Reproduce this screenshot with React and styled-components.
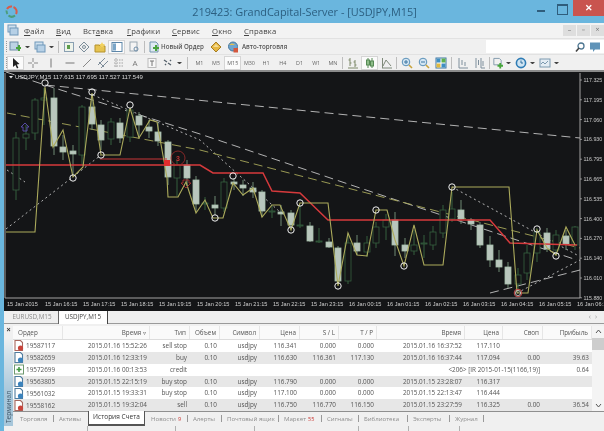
import React from 'react'
import styled, { createGlobalStyle } from 'styled-components'

const GlobalStyle = createGlobalStyle`
  html, body { margin: 0; padding: 0; background: #6ab6de; }
  body { font-family: "Open Sans", "Liberation Sans", sans-serif; overflow: hidden; }
  * { box-sizing: border-box; }
`

const Window = styled.div`
  width: 604px;
  height: 431px;
  display: flex;
  flex-direction: column;
  background: #6ab6de;
  overflow: hidden;
  filter: blur(0.3px);
`

const TitleBar = styled.div`
  height: 23px;
  flex: none;
  position: relative;
  display: flex;
  align-items: center;
  justify-content: center;
`

const Title = styled.div`
  font-size: 10.9px;
  color: #2c5f80;
  margin-top: -1px;
  margin-left: 5px;
`

const Logo = styled.svg`
  position: absolute;
  left: 5px;
  top: 5px;
`

const WinButtons = styled.div`
  position: absolute;
  right: 0;
  top: 0;
  display: flex;
  align-items: flex-start;
`

const WinGlyph = styled.div`
  width: 20px;
  height: 16px;
  position: relative;
  &::after {
    content: '';
    position: absolute;
    left: 5px;
    ${p => (p.$max
      ? 'top: 4px; width: 9px; height: 8px; border: 1px solid #2f5d7c; border-top-width: 2px;'
      : 'top: 10px; width: 8px; height: 2px; background: #2f5d7c;')}
  }
`

const CloseButton = styled.div`
  width: 31px;
  height: 16px;
  margin-left: 1px;
  background: #c9544f;
  color: #fff;
  font: bold 9px "Liberation Sans", sans-serif;
  display: flex;
  align-items: center;
  justify-content: center;
`

const Body = styled.div`
  margin-left: 4px;
  flex: 1;
  min-height: 0;
  display: flex;
  flex-direction: column;
  background: #f0f0f0;
`

const MenuBar = styled.div`
  height: 15px;
  flex: none;
  display: flex;
  align-items: center;
  position: relative;
  background: #f3f3f3;
  padding-left: 3px;
`

const MenuItem = styled.span`
  font-size: 7.7px;
  color: #444;
  width: ${p => p.$w}px;
  letter-spacing: 0.15px;
`

const ChildButtons = styled.div`
  position: absolute;
  right: 0;
  top: 2px;
  display: flex;
  gap: 1px;
`

const ChildButton = styled.div`
  width: 13px;
  height: 11px;
  background: #dedede;
  color: #777;
  font-size: 7px;
  line-height: 10px;
  text-align: center;
`

const ToolRow = styled.div`
  height: 16px;
  flex: none;
  display: flex;
  align-items: center;
  position: relative;
  background: #f0f0f0;
  border-top: 1px solid #e2e2e2;
  padding-left: 3px;
  &::before {
    content: '';
    position: absolute;
    left: 2px;
    top: 2px;
    height: 11px;
    border-left: 1px dotted #9a9a9a;
  }
`

const ToolSlot = styled.div`
  width: ${p => p.$w || 17}px;
  height: 14px;
  flex: none;
  display: flex;
  align-items: center;
  justify-content: center;
  font-size: 5.4px;
  color: #666;
  background: ${p => (p.$on ? '#fbfbfb' : 'transparent')};
  border: 1px solid ${p => (p.$on ? '#d5d5d5' : 'transparent')};
`

const ToolLetter = styled.span`
  font-size: 8px;
  color: #777;
`

const ToolSep = styled.div`
  width: 1px;
  height: 12px;
  flex: none;
  margin: 0 ${p => p.$m || 2}px;
  background: #bdbdbd;
`

const Caret = styled.span`
  width: 5px;
  flex: none;
  margin: 0 2px;
  border-top: 2.5px solid #444;
  border-left: 2px solid transparent;
  border-right: 2px solid transparent;
`

const ToolLabel = styled.span`
  font-size: 6.2px;
  font-weight: 600;
  color: #555;
  flex: none;
  width: ${p => p.$w}px;
  white-space: nowrap;
`

const SearchArea = styled.div`
  margin-left: auto;
  width: 118px;
  height: 13px;
  flex: none;
  display: flex;
  align-items: center;
  background: #fff;
  padding-right: 1px;
`

const SearchFill = styled.div`
  flex: 1;
`

const ChartWrap = styled.div`
  flex: none;
  height: 241px;
  background: #141517;
  border-top: 2px solid #8b8b8b;
`

const ChartSvg = styled.svg`
  display: block;
`

const ChartTabs = styled.div`
  height: 13px;
  flex: none;
  display: flex;
  align-items: stretch;
  position: relative;
  background: #efefef;
  padding-left: 8px;
  border-bottom: 1px solid #9a9a9a;
`

const ChartTab = styled.div`
  font-size: 6.3px;
  line-height: 12px;
  text-align: center;
  width: ${p => p.$w}px;
  margin-right: ${p => p.$gap || 0}px;
  color: ${p => (p.$on ? '#444' : '#8a8a8a')};
  background: ${p => (p.$on ? '#fff' : 'transparent')};
  ${p => p.$on && 'border-left: 1px solid #666; border-right: 1px solid #444; margin-bottom: -1px;'}
`

const ScrollArrows = styled.div`
  position: absolute;
  right: 3px;
  top: 2px;
  font-size: 7px;
  line-height: 8px;
  color: #999;
  letter-spacing: 4px;
`

const Terminal = styled.div`
  flex: 1;
  min-height: 0;
  display: flex;
  background: #f0f0f0;
`

const SideStrip = styled.div`
  width: 9px;
  flex: none;
  display: flex;
  flex-direction: column;
  justify-content: space-between;
  align-items: center;
  background: linear-gradient(#f0f0f0 14px, #d6e2ea 30px, #a6c6da 70px);
  padding-bottom: 8px;
`

const SideClose = styled.div`
  font: bold 7px "Liberation Sans", sans-serif;
  color: #333;
  line-height: 10px;
  margin-top: 1px;
`

const SideLabel = styled.div`
  color: #3d5566;
  font-size: 6.6px;
  writing-mode: vertical-rl;
  transform: rotate(180deg);
  line-height: 9px;
`

const TerminalMain = styled.div`
  flex: 1;
  min-width: 0;
  display: flex;
  flex-direction: column;
`

const TableWrap = styled.div`
  display: flex;
  height: 86px;
  flex: none;
  margin-top: 2px;
  border-bottom: 1px solid #8f8f8f;
`

const Table = styled.div`
  flex: 1;
  min-width: 0;
`

const columns = '50px 87px 40px 30px 40px 40px 39px 38px 88px 38px 40px 49px'

const HeadRow = styled.div`
  display: grid;
  grid-template-columns: ${columns};
  height: 14px;
  background: #fafafa;
  border-bottom: 1px solid #dcdcdc;
`

const HeadCell = styled.div`
  font-size: 6.3px;
  line-height: 13px;
  color: #555;
  text-align: ${p => (p.$left ? 'left' : 'right')};
  padding: 0 3px 0 ${p => (p.$left ? 5 : 0)}px;
  border-right: 1px solid #e6e6e6;
  white-space: nowrap;
`

const Row = styled.div`
  display: grid;
  grid-template-columns: ${columns};
  height: 11.85px;
  background: ${p => (p.$alt ? '#e7e7e7' : '#fff')};
`

const Cell = styled.div`
  font-size: 6.35px;
  line-height: 11.85px;
  color: #555;
  text-align: right;
  padding-right: 3px;
  white-space: nowrap;
  ${p => p.$span && `grid-column: span ${p.$span};`}
`

const OrderCell = styled.div`
  display: flex;
  align-items: center;
  gap: 2px;
  padding-left: 1px;
  font-size: 6.35px;
  color: #555;
`

const OrderGlyph = styled.svg`
  flex: none;
`

const Scrollbar = styled.div`
  width: 12px;
  flex: none;
  display: flex;
  flex-direction: column;
  align-items: center;
  justify-content: space-between;
  background: #f4f4f4;
  position: relative;
`

const ScrollThumb = styled.div`
  position: absolute;
  top: 12px;
  left: 0;
  right: 0;
  height: 12px;
  background: #cdcdcd;
`

const ScrollGlyph = styled.svg`
  margin: 3px 0;
`

const BottomTabs = styled.div`
  height: 14px;
  flex: none;
  display: flex;
  align-items: stretch;
  padding-left: 7px;
`

const BottomTab = styled.div`
  font-size: 6.1px;
  line-height: 13px;
  color: #8d8d8d;
  width: ${p => p.$w}px;
  flex: none;
  position: relative;
  &::after {
    content: '';
    position: absolute;
    right: 5px;
    top: 3px;
    height: 7px;
    border-right: 1px solid #999;
    display: ${p => (p.$plain ? 'none' : 'block')};
  }
`

const ActiveTab = styled.div`
  width: 57px;
  flex: none;
  margin-top: -1px;
  margin-right: 6px;
  font-size: 6.5px;
  line-height: 12px;
  text-align: center;
  color: #333;
  background: #fff;
  border: 1px solid #555;
  border-top: none;
  border-bottom-width: 2px;
`

const RedMark = styled.span`
  color: #c9302c;
  font-size: 5.5px;
  margin-left: 2px;
`

const StatusBar = styled.div`
  height: 6px;
  flex: none;
  margin-left: -9px;
  display: flex;
  background: #f0f0f0;
`

const StatusPart = styled.div`
  width: ${p => p.$w}px;
  flex: none;
  border-right: 1px solid #b0b0b0;
`

const Icon = ({ name }) => {
  const shapes = {
    chartPlus: <><rect x="1" y="1" width="8" height="8" fill="#bcd3e4" stroke="#6d8da6" /><path d="M7 6h2V4h2v2h2v2h-2v2H9V8H7z" fill="#49a33c" /></>,
    windows: <><rect x="1" y="1" width="8" height="7" fill="#cfe0ee" stroke="#6f97b9" /><rect x="3" y="4" width="8" height="7" fill="#b6d0e6" stroke="#6f97b9" /></>,
    chartGreen: <><rect x="1.5" y="1.5" width="9" height="9" fill="#eef3ea" stroke="#8aa0b2" /><path d="M4 4h3v4H4z" fill="#5c9d4a" /></>,
    target: <><path d="M6 1 11 6 6 11 1 6z" fill="none" stroke="#7b8d99" /><circle cx="6" cy="6" r="1.5" fill="none" stroke="#7b8d99" /></>,
    folder: <><path d="M1 4h4l1 1h5v6H1z" fill="#e6c350" stroke="#b5922c" /><path d="M8 1l1 2 2 .3-1.5 1.4.3 2L8 5.8 6.2 6.7l.3-2L5 3.3 7 3z" fill="#f2d25e" /></>,
    pane: <><rect x="1" y="1.5" width="10" height="9" fill="#fff" stroke="#5d86a8" /><rect x="2" y="2.5" width="3" height="7" fill="#7ba6c8" /></>,
    docLens: <><rect x="2" y="1" width="7" height="9" fill="#f4f4f4" stroke="#9aa7b1" /><circle cx="8" cy="8" r="2" fill="none" stroke="#6f8ea8" /></>,
    docGreen: <><path d="M2 1h6l2 2v8H2z" fill="#dfeaf2" stroke="#7595ad" /><path d="M5 6h2V4h2v2h2v2H9v2H7V8H5z" fill="#4aa33c" /></>,
    diamond: <><path d="M6 1l5 5-5 5-5-5z" fill="#e6b743" stroke="#a57d24" /><path d="M3 6l3-3 3 3" fill="#f3dc94" /></>,
    globe: <><circle cx="6" cy="5.5" r="4.5" fill="#6fa5cf" stroke="#46779e" /><path d="M2 4c2-2 4-2 6 0" fill="#e7c04c" /><rect x="6.5" y="7" width="4.5" height="4.5" fill="#d4573d" /></>,
    cursor: <path d="M3 1v9l2.4-2 1.6 3.4 1.4-.7L6.8 7.4 9.5 7z" fill="#222" />,
    cross: <path d="M6 1v4M6 7v4M1 6h4M7 6h4" stroke="#8a8a8a" fill="none" />,
    vline: <path d="M6 1.5v9" stroke="#777" fill="none" />,
    hline: <path d="M1.5 6h9" stroke="#777" fill="none" />,
    trend: <path d="M2 10l8-8" stroke="#888" fill="none" />,
    channel: <path d="M1 8l7-7M4 11l7-7M2 5l5 5" stroke="#7d8c99" fill="none" />,
    fibo: <path d="M1 3h10M1 6h10M1 9h10M3 1v10" stroke="#a3a3a3" strokeDasharray="1.5 1" fill="none" />,
    label: <><rect x="2" y="1.5" width="8" height="9" fill="#f7f7f7" stroke="#bbb" /><path d="M4 4h4M6 4v5" stroke="#777" fill="none" /></>,
    arrows: <path d="M2 3l3 2M6 6l3 2M3 8l1-1M8 3l1 1" stroke="#56626c" strokeWidth="1.4" fill="none" />,
    bars: <path d="M3 1v8M1.5 3H3M3 6h1.5M8 3v7M6.5 5H8M8 8h1.5M1 11h10" stroke="#7f8a6b" fill="none" />,
    candles: <><path d="M4 1v10M8 1v10" stroke="#568a55" /><rect x="2.5" y="3" width="3" height="5" fill="#8fbd8a" stroke="#568a55" /><rect x="6.5" y="4" width="3" height="5" fill="#8fbd8a" stroke="#568a55" /></>,
    line: <path d="M1 11h10M1.5 1v10M2 9l3-6 5 6" stroke="#7f8a7a" fill="none" />,
    zoomIn: <><circle cx="5" cy="5" r="3.8" fill="#d4e6f3" stroke="#5a90b8" /><path d="M3 5h4M5 3v4" stroke="#3c76a3" /><path d="M8 8l3 3" stroke="#c9a43c" strokeWidth="1.6" /></>,
    zoomOut: <><circle cx="5" cy="5" r="3.8" fill="#d4e6f3" stroke="#5a90b8" /><path d="M3 5h4" stroke="#3c76a3" /><path d="M8 8l3 3" stroke="#c9a43c" strokeWidth="1.6" /></>,
    grid: <><rect x="1" y="1" width="10" height="10" fill="#fff" stroke="#3f77a3" /><rect x="1.5" y="1.5" width="4" height="4" fill="#3f8ec1" /><rect x="6.5" y="1.5" width="4" height="4" fill="#5eb04d" /><rect x="1.5" y="6.5" width="4" height="4" fill="#e0b93e" /><rect x="6.5" y="6.5" width="4" height="4" fill="#3f8ec1" /></>,
    shift: <path d="M2 1v10h9M5 3v5M8 5v4" stroke="#7f8f9c" fill="none" />,
    shift2: <path d="M2 1v10M7 1v10h4M4.5 3v5M9 4v5" stroke="#7f8f9c" fill="none" />,
    indicator: <><path d="M2 1h6l2 2v5H2z" fill="#f1f1f1" stroke="#7e97a8" /><path d="M6 8h2V6h2v2h2v2h-2v2H8v-2H6z" fill="#45a53a" /></>,
    clock: <><circle cx="6" cy="6" r="4.6" fill="#cfe4f2" stroke="#2f7cb5" strokeWidth="1.6" /><path d="M6 3.5V6h2" stroke="#2f6d9c" fill="none" /></>,
    template: <><rect x="1" y="2" width="10" height="8" fill="#e4edf4" stroke="#7d9ab0" /><path d="M2 7l2-2 2 2 3-3" stroke="#7d9ab0" fill="none" /></>,
    lens: <><circle cx="7" cy="5" r="3" fill="none" stroke="#4d7691" strokeWidth="1.3" /><path d="M5 7L2 10.5" stroke="#444" strokeWidth="1.6" /></>,
    chat: <path d="M1 1.5h10v7H6l-2 2.5V8.5H1z" fill="#5f93b8" />,
  }
  return <svg width="12" height="12" viewBox="0 0 12 12">{shapes[name]}</svg>
}

const OrderIcon = ({ kind }) => (
  <OrderGlyph width="10" height="11" viewBox="0 0 10 11">
    {kind === 'credit' ? (
      <>
        <rect x="0.5" y="1" width="9" height="9" fill="#fff" stroke="#6f9a6f" />
        <path d="M2.5 5.5h5M5 3v5" stroke="#3c963c" strokeWidth="1.5" />
      </>
    ) : (
      <>
        <path d="M1 .5h5.5l2 2v8H1z" fill="#fff" stroke={kind === 'sell' ? '#a8685f' : '#4f7c9e'} strokeWidth="1.1" />
        <circle cx="6.5" cy="8" r="2.6" fill={kind === 'sell' ? '#c8433a' : '#3b83bd'} />
      </>
    )}
  </OrderGlyph>
)

const candles = [
  [16, 138, 190, 132, 200, 0], [26, 134, 138, 125, 150, 0], [35, 100, 133, 98, 140, 0],
  [44, 98, 100, 88, 125, 0], [54, 98, 146, 88, 155, 1], [63, 147, 152, 135, 160, 1],
  [73, 151, 154, 145, 175, 1], [82, 107, 155, 105, 165, 0], [92, 107, 124, 94, 130, 1],
  [101, 125, 140, 120, 150, 1], [111, 122, 139, 118, 145, 0], [120, 123, 138, 118, 143, 1],
  [130, 110, 137, 108, 142, 0], [139, 116, 125, 112, 138, 1], [149, 127, 131, 120, 138, 1],
  [158, 132, 141, 122, 146, 1], [168, 142, 177, 140, 185, 1], [177, 165, 178, 160, 196, 0],
  [187, 165, 178, 160, 186, 1], [196, 180, 204, 176, 212, 1], [205, 203, 204, 197, 210, 0],
  [215, 205, 208, 196, 215, 1], [224, 182, 208, 178, 212, 0], [234, 182, 184, 178, 190, 1],
  [243, 185, 188, 180, 196, 1], [253, 188, 192, 182, 198, 1], [262, 192, 211, 190, 217, 1],
  [272, 211, 212, 205, 218, 0], [281, 212, 214, 205, 226, 1], [291, 213, 225, 210, 229, 1],
  [300, 225, 226, 205, 228, 0], [310, 226, 241, 222, 242, 1], [319, 241, 242, 228, 243, 0],
  [329, 242, 247, 238, 248, 1], [338, 248, 281, 246, 284, 1], [348, 243, 281, 233, 284, 0],
  [357, 243, 251, 235, 255, 1], [367, 243, 252, 236, 257, 0], [376, 227, 243, 222, 248, 0],
  [386, 220, 227, 214, 240, 0], [395, 220, 245, 212, 256, 1], [405, 245, 251, 238, 258, 1],
  [414, 245, 251, 230, 255, 0], [424, 243, 244, 235, 258, 0], [433, 232, 245, 226, 250, 0],
  [443, 210, 233, 205, 238, 0], [452, 209, 219, 192, 222, 0], [461, 210, 219, 200, 224, 1],
  [471, 220, 224, 218, 230, 1], [480, 225, 245, 222, 248, 1], [490, 245, 260, 236, 267, 1],
  [499, 260, 267, 250, 272, 1], [508, 267, 284, 262, 288, 1], [518, 275, 284, 268, 292, 0],
  [527, 253, 273, 245, 280, 0], [537, 232, 253, 228, 262, 0], [547, 233, 249, 228, 252, 1],
  [556, 235, 250, 230, 256, 0], [566, 236, 244, 230, 250, 1], [575, 227, 245, 226, 250, 0],
]

const zigzag = '6,232 35,232 45,87 53,147 63,130 73,177 83,167 92,93 101,155 120,155 130,108 139,138 150,120 157,122 167,178 168,197 178,197 186,182 196,213 205,200 213,218 223,218 233,183 243,195 253,188 262,217 272,205 280,205 291,230 300,203 328,203 338,286 348,233 357,255 367,256 376,210 387,210 395,240 404,266 414,225 424,265 443,265 452,187 509,187 517,293 528,293 537,230 547,248 556,255 566,227 575,245'

const redLine = '6,165 200,165 213,173 263,173 272,191 300,193 328,220 490,220 510,243 577,245'

const rings = [
  [45, 83], [92, 92], [130, 105], [73, 178], [101, 155], [233, 176], [215, 218], [291, 230],
  [300, 203], [338, 286], [376, 210], [404, 266], [452, 187], [537, 229], [556, 256],
]

const prices = ['117.325', '117.195', '117.060', '116.930', '116.795', '116.665', '116.535', '116.400', '116.270', '116.140', '116.010', '115.880']

const times = ['15 Jan 2015', '15 Jan 16:15', '15 Jan 17:15', '15 Jan 18:15', '15 Jan 19:15', '15 Jan 20:15', '15 Jan 21:15', '15 Jan 22:15', '15 Jan 23:15', '16 Jan 00:15', '16 Jan 01:15', '16 Jan 02:15', '16 Jan 03:15', '16 Jan 04:15', '16 Jan 05:15', '16 Jan 06:15']

const Chart = () => (
  <ChartSvg width="600" height="239" viewBox="4 72 600 239" fontFamily="Liberation Sans, sans-serif">
    <path d="M5 73V298H580V73" fill="none" stroke="#c8c8c8" strokeWidth="0.8" />
    <g strokeWidth="0.9" fill="none" stroke="#c4c4c4">
      <path d="M6 72L45 85L580 138" strokeDasharray="9 5" />
      <path d="M45 85L200 134L357 187L577 260" strokeDasharray="9 5" />
      <path d="M93 95L200 140L280 212" strokeDasharray="2 3" />
      <path d="M6 229L101 155" strokeDasharray="2 3" />
      <path d="M7 170L25 182" strokeDasharray="2 3" />
      <path d="M452 187L577 255" strokeDasharray="2 3" />
      <path d="M517 293L580 260" strokeDasharray="2 3" />
      <path d="M490 293L580 270" strokeDasharray="9 5" />
      <path d="M7 113L200 150L580 248" stroke="#a8a85a" strokeDasharray="9 5" />
    </g>
    {candles.map(([x, top, bottom, wickTop, wickBottom, filled]) => (
      <g key={x}>
        <path d={`M${x} ${wickTop}V${wickBottom}`} stroke={filled ? '#6f8a74' : '#35603f'} strokeWidth="1" />
        <rect
          x={x - 3}
          y={top}
          width="6"
          height={bottom - top}
          fill={filled ? '#b9c6bd' : '#141517'}
          stroke={filled ? '#a7c0ad' : '#35603f'}
          strokeWidth="0.8"
        />
      </g>
    ))}
    <polyline points={redLine} fill="none" stroke="#d63a3c" strokeWidth="1.5" />
    <path d="M100 159H167" stroke="#c83638" strokeWidth="1" fill="none" />
    <polyline points={zigzag} fill="none" stroke="#acab5c" strokeWidth="1.1" />
    <rect x="164" y="160" width="6" height="6" fill="#e22d2d" />
    <circle cx="178" cy="158" r="7" fill="none" stroke="#a12c2c" strokeWidth="0.8" />
    <text x="178" y="161" fontSize="7" fontWeight="bold" textAnchor="middle" fill="#c23434">3</text>
    <path d="M183 180h6v3h2l-5 5-5-5h2z" fill="none" stroke="#b83434" strokeWidth="0.8" />
    <path d="M25 123l4 4h-2v4h-4v-4h-2z" fill="none" stroke="#5b4fb0" strokeWidth="0.9" />
    <circle cx="518" cy="293" r="3.8" fill="none" stroke="#c9504f" strokeWidth="1" />
    <circle cx="518" cy="293" r="2.6" fill="none" stroke="#eee" strokeWidth="0.7" />
    {rings.map(([x, y]) => (
      <circle key={`${x}-${y}`} cx={x} cy={y} r="3.2" fill="none" stroke="#f0f0f0" strokeWidth="1" />
    ))}
    <path d="M9 76h4l-2 2.5z" fill="#e8e8e8" />
    <text x="15" y="78.5" fontSize="6" fill="#d8d8d8">USDJPY,M15  117.615 117.695 117.527 117.549</text>
    {prices.map((p, i) => (
      <g key={p}>
        <path d={`M580 ${80 + i * 19.8}h2`} stroke="#bbb" strokeWidth="0.7" />
        <text x="583.5" y={82 + i * 19.8} fontSize="5.3" fill="#c8c8c8">{p}</text>
      </g>
    ))}
    {times.map((t, i) => (
      <text key={t} x={7 + i * 38} y="306" fontSize="5.6" fill="#d0d0d0">{t}</text>
    ))}
  </ChartSvg>
)

const menu = [['Ф', 'айл', 32], ['В', 'ид', 27], ['Вст', 'а', 44, 'вка'], ['Г', 'рафики', 45], ['С', 'ервис', 40], ['О', 'кно', 32], ['С', 'правка', 40]]

const rows = [
  { id: '19587117', icon: 'sell', open: '2015.01.16 15:52:26', type: 'sell stop', vol: '0.10', sym: 'usdjpy', price: '116.341', sl: '0.000', tp: '0.000', close: '2015.01.16 16:37:52', cp: '117.110', swap: '', profit: '' },
  { id: '19582659', icon: 'buy', open: '2015.01.16 12:33:19', type: 'buy', vol: '0.10', sym: 'usdjpy', price: '116.630', sl: '116.361', tp: '117.130', close: '2015.01.16 16:37:44', cp: '117.094', swap: '0.00', profit: '39.63' },
  { id: '19572699', icon: 'credit', open: '2015.01.16 00:13:53', type: 'credit', note: '<206> [IR 2015-01-15(1166,19)]', profit: '0.64' },
  { id: '19563805', icon: 'buy', open: '2015.01.15 22:15:19', type: 'buy stop', vol: '0.10', sym: 'usdjpy', price: '116.790', sl: '0.000', tp: '0.000', close: '2015.01.15 23:28:07', cp: '116.317', swap: '', profit: '' },
  { id: '19561032', icon: 'buy', open: '2015.01.15 19:33:31', type: 'buy stop', vol: '0.10', sym: 'usdjpy', price: '117.100', sl: '0.000', tp: '0.000', close: '2015.01.15 22:13:47', cp: '116.444', swap: '', profit: '' },
  { id: '19558162', icon: 'sell', open: '2015.01.15 19:32:04', type: 'sell', vol: '0.10', sym: 'usdjpy', price: '116.750', sl: '116.770', tp: '116.150', close: '2015.01.15 23:27:59', cp: '116.325', swap: '0.00', profit: '36.54' },
]

const heads = ['Время  ▿', 'Тип', 'Объем', 'Символ', 'Цена', 'S / L', 'T / P', 'Время', 'Цена', 'Своп', 'Прибыль']

const periods = ['M1', 'M5', 'M15', 'M30', 'H1', 'H4', 'D1', 'W1', 'MN']

const App = () => (
  <Window>
    <GlobalStyle />
    <TitleBar>
      <Logo width="13" height="13" viewBox="0 0 13 13">
        <path d="M2 4A5 5 0 0 1 7 1.5" stroke="#d85b4a" strokeWidth="2" fill="none" />
        <path d="M8.5 2A5 5 0 0 1 11 9" stroke="#d85b4a" strokeWidth="2" fill="none" />
        <path d="M10 10.5A5 5 0 0 1 3.5 10.5" stroke="#4b9c78" strokeWidth="2" fill="none" />
        <path d="M2.4 9A5 5 0 0 1 1.6 5.5" stroke="#4b9c78" strokeWidth="2" fill="none" />
      </Logo>
      <Title>219423: GrandCapital-Server - [USDJPY,M15]</Title>
      <WinButtons>
        <WinGlyph />
        <WinGlyph $max />
        <CloseButton>✕</CloseButton>
      </WinButtons>
    </TitleBar>
    <Body>
      <MenuBar>
        <MenuItem $w={17}><Icon name="windows" /></MenuItem>
        {menu.map(([a, b, w, c]) => (
          <MenuItem key={a + b} $w={w}>
            {c ? <>{a}<u>{b}</u>{c}</> : <><u>{a}</u>{b}</>}
          </MenuItem>
        ))}
        <ChildButtons>
          <ChildButton>–</ChildButton>
          <ChildButton>▫</ChildButton>
          <ChildButton>×</ChildButton>
        </ChildButtons>
      </MenuBar>
      <ToolRow>
        <ToolSlot $w={16}><Icon name="chartPlus" /></ToolSlot>
        <Caret />
        <ToolSlot $w={15}><Icon name="windows" /></ToolSlot>
        <Caret />
        <ToolSep />
        <ToolSlot $w={15}><Icon name="chartGreen" /></ToolSlot>
        <ToolSlot $w={16}><Icon name="target" /></ToolSlot>
        <ToolSlot $w={16}><Icon name="folder" /></ToolSlot>
        <ToolSlot $on><Icon name="pane" /></ToolSlot>
        <ToolSlot><Icon name="docLens" /></ToolSlot>
        <ToolSep />
        <ToolSlot $w={14}><Icon name="docGreen" /></ToolSlot>
        <ToolLabel $w={47}>Новый Ордер</ToolLabel>
        <ToolSlot $w={16}><Icon name="diamond" /></ToolSlot>
        <ToolSlot $w={18}><Icon name="globe" /></ToolSlot>
        <ToolLabel $w={48}>Авто-торговля</ToolLabel>
        <SearchArea>
          <SearchFill />
          <Icon name="lens" />
          <ToolSlot $w={17}><Icon name="chat" /></ToolSlot>
        </SearchArea>
      </ToolRow>
      <ToolRow>
        <ToolSlot $on><Icon name="cursor" /></ToolSlot>
        <ToolSlot><Icon name="cross" /></ToolSlot>
        <ToolSlot $w={20}><Icon name="vline" /></ToolSlot>
        <ToolSlot><Icon name="hline" /></ToolSlot>
        <ToolSlot><Icon name="trend" /></ToolSlot>
        <ToolSlot $w={16}><Icon name="channel" /></ToolSlot>
        <ToolSlot $w={16}><Icon name="fibo" /></ToolSlot>
        <ToolSlot $w={16}><ToolLetter>A</ToolLetter></ToolSlot>
        <ToolSlot $w={18}><Icon name="label" /></ToolSlot>
        <ToolSlot $w={14}><Icon name="arrows" /></ToolSlot>
        <Caret />
        <ToolSep $m={3} />
        {periods.map(p => (
          <ToolSlot key={p} $on={p === 'M15'} $w={16.7}>{p}</ToolSlot>
        ))}
        <ToolSep $m={1} />
        <ToolSlot><Icon name="bars" /></ToolSlot>
        <ToolSlot $on><Icon name="candles" /></ToolSlot>
        <ToolSlot><Icon name="line" /></ToolSlot>
        <ToolSep $m={1} />
        <ToolSlot><Icon name="zoomIn" /></ToolSlot>
        <ToolSlot><Icon name="zoomOut" /></ToolSlot>
        <ToolSlot><Icon name="grid" /></ToolSlot>
        <ToolSep $m={2} />
        <ToolSlot><Icon name="shift" /></ToolSlot>
        <ToolSlot><Icon name="shift2" /></ToolSlot>
        <ToolSep $m={1} />
        <ToolSlot $w={13}><Icon name="indicator" /></ToolSlot>
        <Caret />
        <ToolSlot $w={15}><Icon name="clock" /></ToolSlot>
        <Caret />
        <ToolSlot $w={15}><Icon name="template" /></ToolSlot>
        <Caret />
      </ToolRow>
      <ChartWrap>
        <Chart />
      </ChartWrap>
      <ChartTabs>
        <ChartTab $w={40} $gap={6}>EURUSD,M15</ChartTab>
        <ChartTab $on $w={50}>USDJPY,M15</ChartTab>
        <ScrollArrows>‹›</ScrollArrows>
      </ChartTabs>
      <Terminal>
        <SideStrip>
          <SideClose>×</SideClose>
          <SideLabel>Терминал</SideLabel>
        </SideStrip>
        <TerminalMain>
          <TableWrap>
            <Table>
              <HeadRow>
                <HeadCell $left>Ордер</HeadCell>
                {heads.map((h, i) => <HeadCell key={i}>{h}</HeadCell>)}
              </HeadRow>
              {rows.map((r, i) => (
                <Row key={r.id} $alt={i % 2 === 1}>
                  <OrderCell><OrderIcon kind={r.icon} />{r.id}</OrderCell>
                  <Cell>{r.open}</Cell>
                  <Cell>{r.type}</Cell>
                  {r.note ? (
                    <>
                      <Cell $span={8}>{r.note}</Cell>
                      <Cell>{r.profit}</Cell>
                    </>
                  ) : (
                    <>
                      <Cell>{r.vol}</Cell>
                      <Cell>{r.sym}</Cell>
                      <Cell>{r.price}</Cell>
                      <Cell>{r.sl}</Cell>
                      <Cell>{r.tp}</Cell>
                      <Cell>{r.close}</Cell>
                      <Cell>{r.cp}</Cell>
                      <Cell>{r.swap}</Cell>
                      <Cell>{r.profit}</Cell>
                    </>
                  )}
                </Row>
              ))}
            </Table>
            <Scrollbar>
              <ScrollThumb />
              <ScrollGlyph width="7" height="5" viewBox="0 0 7 5"><path d="M1 4l2.5-3L6 4" stroke="#555" fill="none" /></ScrollGlyph>
              <ScrollGlyph width="7" height="5" viewBox="0 0 7 5"><path d="M1 1l2.5 3L6 1" stroke="#555" fill="none" /></ScrollGlyph>
            </Scrollbar>
          </TableWrap>
          <BottomTabs>
            <BottomTab $w={39}>Торговля</BottomTab>
            <BottomTab $w={29} $plain>Активы</BottomTab>
            <ActiveTab>История Счета</ActiveTab>
            <BottomTab $w={42}>Новости<RedMark>9</RedMark></BottomTab>
            <BottomTab $w={34}>Алерты</BottomTab>
            <BottomTab $w={57}>Почтовый ящик</BottomTab>
            <BottomTab $w={43}>Маркет<RedMark>55</RedMark></BottomTab>
            <BottomTab $w={37}>Сигналы</BottomTab>
            <BottomTab $w={49}>Библиотека</BottomTab>
            <BottomTab $w={42}>Эксперты</BottomTab>
            <BottomTab $w={34}>Журнал</BottomTab>
          </BottomTabs>
          <StatusBar>
            <StatusPart $w={84} />
            <StatusPart $w={88} />
            <StatusPart $w={79} />
            <StatusPart $w={104} />
            <StatusPart $w={50} />
            <StatusPart $w={51} />
          </StatusBar>
        </TerminalMain>
      </Terminal>
    </Body>
  </Window>
)

export default App
